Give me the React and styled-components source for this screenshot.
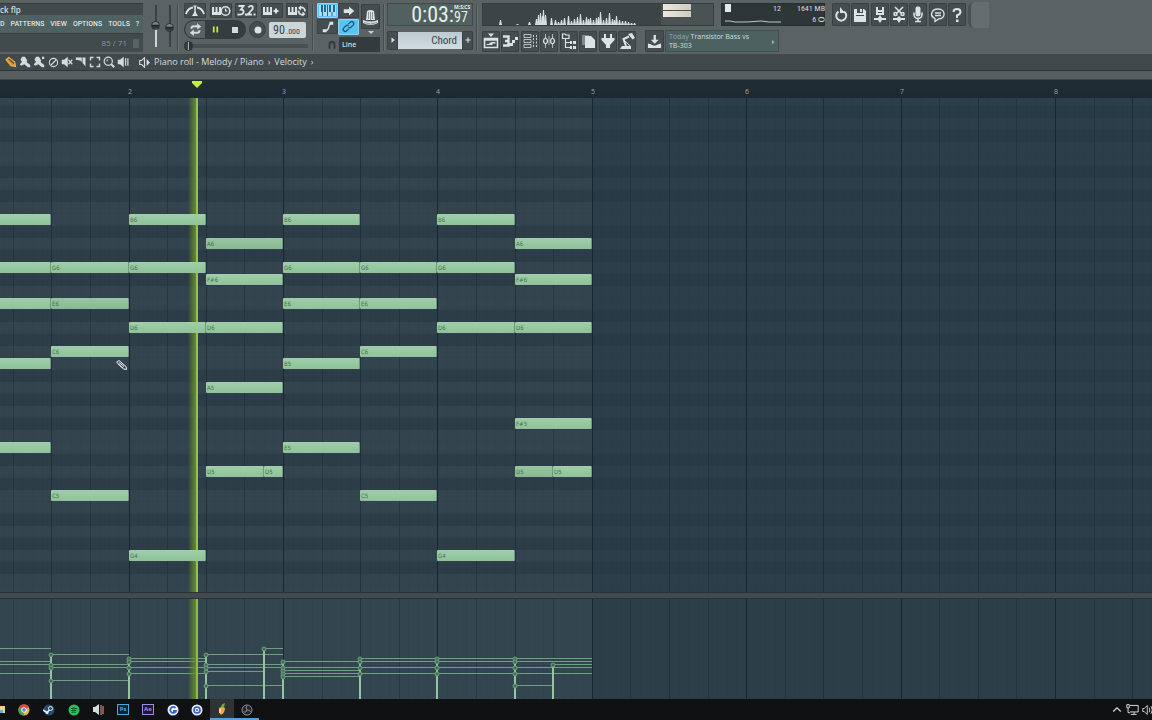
import React from 'react';
import styled, { createGlobalStyle, css } from 'styled-components';

const Global = createGlobalStyle`
  *, *::before, *::after { box-sizing: border-box; }
  body { margin: 0; background: #101112; overflow-x: hidden; }
  button, input, select { font: inherit; color: inherit; margin: 0; padding: 0; border: 0; background: none; outline: none; }
`;

const narrow = '"Liberation Sans Narrow", "Roboto Condensed", "Open Sans Condensed", "DejaVu Sans Condensed", sans-serif';
const sans = '"Open Sans", "Noto Sans", sans-serif';

/* ---------- frame ---------- */
const Page = styled.div`
  display: flex;
  flex-direction: column;
  min-height: 100vh;
  overflow: hidden;
  font-family: ${sans};
  color: #d3dcdd;
`;
const Header = styled.header`
  display: flex;
  height: 54px;
  background: #5a6264;
  overflow: hidden;
`;
const Col = styled.div`
  display: flex;
  flex-direction: column;
  flex: none;
  width: ${p => p.$w}px;
  margin-right: ${p => p.$mr || 0}px;
  padding-top: ${p => p.$flush ? 0 : 3}px;
  gap: ${p => p.$gap || 0}px;
`;
const Line = styled.div`
  display: flex;
  flex: none;
  align-items: center;
  justify-content: ${p => p.$justify || 'flex-start'};
  height: ${p => p.$h}px;
  gap: ${p => p.$gap || 0}px;
`;
const Divider = styled.div`
  flex: none;
  width: 2px;
  margin: 4px ${p => p.$mr || 0}px 3px 0;
  background: #454c4f;
  border-right: 1px solid #697173;
`;

/* ---------- title and menu ---------- */
const Title = styled.div`
  height: 12px;
  background: #424a4c;
  border-top: 1px solid #343b3e;
  font: 600 8px/11px ${sans};
`;
const Menu = styled.nav`
  display: flex;
  align-items: center;
  height: 18px;
  gap: 6px;
  background: #4f6261;
  font: 8px/18px ${narrow};
  color: #f2f7f6;
  button { white-space: nowrap; }
`;
const Hint = styled.div`
  display: flex;
  justify-content: flex-end;
  align-items: center;
  gap: 6px;
  height: 19px;
  padding-right: 4px;
  background: #424a4c;
  border-top: 1px solid #363e40;
  font: 8px/16px ${sans};
  color: #8e9798;
  i { width: 6px; height: 9px; background: #596163; }
`;

const VSlider = styled.input.attrs({ type: 'range' })`
  appearance: none;
  writing-mode: vertical-lr;
  direction: rtl;
  width: 9px;
  height: 42px;
  background: linear-gradient(#3b4244, #3b4244) center / 2px 100% no-repeat;
  ${p => p.$lit && css`background: linear-gradient(#3b4244 50%, #cdd5d6 50%) center / 2px 100% no-repeat;`}
  &::-webkit-slider-thumb {
    appearance: none;
    width: 9px;
    height: 9px;
    border-radius: 5px;
    background: linear-gradient(#7d8587 30%, #22282a 50%, #454c4f);
    border: 1px solid #2d3335;
  }
`;
const HSlider = styled.input.attrs({ type: 'range' })`
  appearance: none;
  width: 100%;
  height: 10px;
  background: linear-gradient(#495053, #495053) center / 100% 4px no-repeat;
  &::-webkit-slider-thumb {
    appearance: none;
    width: 9px;
    height: 10px;
    border-radius: 5px;
    background: linear-gradient(90deg, #3a4143 40%, #aab2b3 50%, #2d3436 60%);
    border: 1px solid #2b3234;
  }
`;

/* ---------- buttons ---------- */
const Tool = styled.button`
  display: flex;
  flex: none;
  align-items: center;
  justify-content: center;
  width: ${p => p.$w || 22}px;
  height: ${p => p.$h || 15}px;
  background: ${p => p.$on ? '#5cc3f2' : '#454d50'};
  border: 1px solid ${p => p.$on ? '#8ad8f8' : '#394144'};
  border-radius: ${p => p.$round ? 9 : 1}px;
  color: ${p => p.$on ? '#195a82' : '#dce3e4'};
`;
const HatCol = styled.div`
  display: flex;
  flex-direction: column;
  align-items: center;
  gap: 2px;
`;
const Pill = styled.div`
  display: flex;
  flex: none;
  height: 19px;
  width: 62px;
  border: 1px solid #333a3c;
  border-radius: 10px;
  overflow: hidden;
  background: #363d3f;
  button { display: flex; flex: 1; align-items: center; justify-content: center; }
  button:first-child { background: #596163; border-radius: 9px 0 0 9px; }
`;
const Tempo = styled.label`
  display: flex;
  align-items: baseline;
  justify-content: flex-end;
  flex: none;
  width: 37px;
  height: 16px;
  padding-right: 6px;
  border-radius: 2px;
  background: #ccd6d9;
  color: #38444a;
  font: 8px/16px ${narrow};
  input { width: 13px; height: 16px; font-size: 12px; }
`;
const Snap = styled.select`
  appearance: none;
  width: 41px;
  height: 15px;
  padding-left: 3px;
  background: #343b3e;
  font: 600 7px/15px ${sans};
`;
const Clock = styled.div`
  display: flex;
  justify-content: flex-end;
  height: 23px;
  background: #50615f;
  border: 1px solid #414b4c;
  color: #e6efed;
  font: 22px/21px ${narrow};
`;
const Cents = styled.span`
  display: flex;
  flex-direction: column;
  width: 18px;
  font: 14px/13px ${narrow};
  small { font: 700 5px/7px ${sans}; }
`;
const Pattern = styled.select`
  appearance: none;
  flex: 1;
  height: 17px;
  padding-right: 5px;
  background: linear-gradient(#bccad1, #d2dde0);
  color: #34434b;
  font: 11px/17px ${narrow};
  text-align-last: right;
`;
const Scope = styled.div`
  display: flex;
  flex: none;
  width: 232px;
  height: 23px;
  background: #3d4447;
  border: 1px solid #353c3f;
`;
const Meter = styled.div`
  width: 52px;
  padding: 0 2px;
  background: #4b5254;
  div { width: 28px; height: 6px; margin-bottom: 1px; background: linear-gradient(90deg, #ece9dc, #cfcdbf); }
`;
const Cpu = styled.div`
  display: grid;
  grid-template-columns: 10px 1fr 44px;
  flex: none;
  width: 104px;
  height: 23px;
  padding: 0 2px 0 3px;
  background: #2e3638;
  border: 1px solid #272e30;
  font: 8px/10px ${narrow};
  text-align: right;
  svg { grid-column: 1 / 3; }
  i { width: 6px; height: 8px; background: #e3e8e8; }
`;
const News = styled.button`
  display: flex;
  align-items: center;
  justify-content: space-between;
  width: 114px;
  height: 22px;
  padding: 0 4px 0 3px;
  background: #4d6160;
  border: 1px solid #41504f;
  font: 7px/9px ${sans};
  text-align: left;
  span span { color: #94a3a3; }
`;
const Patch = styled.div`
  width: 21px;
  height: 26px;
  background: #656d6e;
  border-left: 3px solid #4a5254;
  border-radius: 6px 0 0 6px;
`;

/* ---------- piano roll toolbar ---------- */
const RollBar = styled.div`
  display: flex;
  align-items: center;
  height: 17px;
  padding-left: 4px;
  background: #42494c;
  border-bottom: 1px solid #2f3537;
  button { display: flex; width: 14px; justify-content: center; }
`;
const Crumbs = styled.div`
  display: flex;
  gap: 4px;
  padding-left: 9px;
  align-items: center;
  font: 500 9px/16px ${sans};
  white-space: nowrap;
`;
const Strip = styled.div`
  height: 9px;
  background: #565e60;
  border-bottom: 1px solid #3a4346;
`;

/* ---------- editor ---------- */
const Ruler = styled.div`
  position: relative;
  height: 18px;
  background: linear-gradient(#202e36, #1c2930);
  overflow: hidden;
  svg { position: absolute; top: 1px; left: 191px; }
`;
const BarNumber = styled.span`
  position: absolute;
  bottom: 0;
  font: 7px/13px ${sans};
  color: #9aa6aa;
`;
const Grid = styled.main`
  position: relative;
  flex: 1 0 494px;
  overflow: hidden;
  background: #31434e;
`;
const Rows = styled.div`
  position: absolute;
  inset: 0;
`;
const KeyRow = styled.div`
  height: ${p => p.$h || 12}px;
  background: ${p => p.$black ? '#2d3d48' : '#33444f'};
  border-bottom: 1px solid ${p => p.$black ? '#2d3d48' : '#31424c'};
`;
const GridLine = styled.div`
  position: absolute;
  top: 0;
  bottom: 0;
  width: 1px;
  background: ${p => ({ bar: '#172731', half: 'rgba(20,34,43,.5)', beat: 'rgba(20,34,43,.32)', sub: 'rgba(20,34,43,.06)' })[p.$kind]};
`;
const Beyond = styled.div`
  position: absolute;
  top: 0;
  bottom: 0;
  right: 0;
  background: rgba(32, 54, 64, .36);
`;
const NoteBox = styled.div`
  position: absolute;
  height: 11px;
  padding-left: 1px;
  overflow: hidden;
  background: ${p => p.$dim ? 'linear-gradient(#96c7a0, #88b994)' : 'linear-gradient(#9fcfa8, #8fc29a)'};
  border-right: 1px solid #6d9a7c;
  border-radius: 1px;
  color: #44704f;
  font: 6px/12px "DejaVu Sans Condensed", "DejaVu Sans", sans-serif;
`;
const Playhead = styled.div`
  position: absolute;
  top: 0;
  bottom: 0;
  left: 188px;
  width: 10px;
  background: linear-gradient(90deg, rgba(100,140,30,0), rgba(104,146,36,.85) 7px, #5f8a2c 8px, #8fb848 8px, #8fb848);
`;
const Glow = styled.div`
  position: absolute;
  top: 0;
  bottom: 0;
  left: 196px;
  width: 2px;
  background: rgba(160, 205, 90, .4);
`;
const Cursor = styled.svg`
  position: absolute;
  left: 115px;
  top: 261px;
`;
const Splitter = styled.div`
  height: 7px;
  background: #43494c;
  border: solid #283238;
  border-width: 1px 0;
`;
const Velocity = styled.section`
  position: relative;
  height: 100px;
  overflow: hidden;
  background: #33454f;
  svg { position: absolute; inset: 0; width: 100%; height: 100%; }
`;

/* ---------- taskbar ---------- */
const Taskbar = styled.footer`
  display: flex;
  justify-content: space-between;
  height: 21px;
  background: #101112;
  overflow: hidden;
`;
const Apps = styled.div`
  display: grid;
  grid-template-columns: 12px repeat(10, 1fr);
  width: 259px;
`;
const AppButton = styled.button`
  display: flex;
  align-items: center;
  justify-content: center;
  min-width: 0;
  background: ${p => p.$active ? '#303336' : 'none'};
  ${p => p.$open && css`box-shadow: inset 0 -2px #5f9ed0;`}
`;
const Badge = styled.span`
  width: 12px;
  height: 11px;
  border: 1px solid ${p => p.$c};
  background: ${p => p.$bg};
  color: ${p => p.$c};
  font: 700 6px/9px ${sans};
  text-align: center;
`;
const Tray = styled.div`
  display: flex;
  align-items: center;
  gap: 3px;
  margin-right: -2px;
  button { display: flex; }
`;

/* ---------- icons ---------- */
const Svg = ({ s = 14, w = s, box = 16, children, fill }) => (
  <svg width={w} height={s} viewBox={`0 0 ${box * w / s} ${box}`} fill={fill ? 'currentColor' : 'none'} stroke={fill ? 'none' : 'currentColor'} strokeWidth="1.6" aria-hidden="true">{children}</svg>
);
const Keys = ({ children }) => (
  <svg width="20" height="12" viewBox="0 0 20 12" fill="none" stroke="currentColor" strokeWidth="1.5" aria-hidden="true">
    <path d="M1 2h2v5h1.500V2h2v5H8V2h2v8H1z" fill="currentColor" stroke="none" />
    {children}
  </svg>
);
const icons = {
  metronome: <svg width="20" height="13" viewBox="0 0 20 13" fill="none" stroke="currentColor" aria-hidden="true"><path d="M1 10Q3 4 8 3.500M19 10Q17 4 12 3.500" strokeWidth="1.800" /><path d="M10 3v7" strokeWidth="1.500" /><path d="M7 12l3-5 3 5zM8 1.500h4L10 4z" fill="currentColor" stroke="none" /></svg>,
  wait: <Keys><circle cx="14.500" cy="6" r="4.300" /><path d="M14.500 3.500V6h2" strokeWidth="1.200" /></Keys>,
  overdub: <Keys><path d="M11.500 6h5M14 3.500v5" strokeWidth="2" /></Keys>,
  loopRec: <Keys><path d="M18 6.500A3.600 3.600 0 0 0 13 2.700M11.500 5.500A3.600 3.600 0 0 0 16.500 9.300" strokeWidth="1.700" /><path d="M14 .5v5L11 3zM15.500 6.500v5L18.500 9z" fill="currentColor" stroke="none" /></Keys>,
  count: <svg width="20" height="13" viewBox="0 0 20 13" fill="none" stroke="currentColor" strokeWidth="1.800" aria-hidden="true"><path d="M2.500 2h5L5 5.500q3 0 2.500 2.800T1.500 10.500M12.500 3.500q1-1.800 3-1.500t1 3.300L11.500 10.500h4.500" /><path d="M9 9.500h2v2H9zM17.500 9.500h2v2h-2z" fill="currentColor" stroke="none" /></svg>,
  swap: <Svg s={13}><path d="M3 7q0-3 3-3h5M13 9q0 3-3 3H4" strokeWidth="2.300" /><path d="M10 0l5 4.500L10 8zM6 8l-5 4 5 4z" fill="currentColor" stroke="none" /></Svg>,
  piano: <svg width="19" height="13" viewBox="0 0 19 13" aria-hidden="true"><path fill="#a9dcf5" d="M1 1h17v11H1z" /><path fill="#1c6a98" d="M3 1h2v7H3zM6 1h2v7H6zM11 1h2v7h-2zM15 1h2v7h-2zM5 8v4H4V8zM9 1h1v11H9zM13.500 8v4h1V8z" /></svg>,
  arrow: <Svg s={12} fill><path d="M1 5.500h7V2l7 6-7 6v-3.500H1z" /></Svg>,
  slide: <Svg s={12}><path d="M4 13q4 0 5-5t4-5" strokeWidth="1.800" /><path d="M1 11h5v4H1zM10 1h5v4h-5z" fill="currentColor" stroke="none" /></Svg>,
  link: <Svg s={13}><path d="M8 5l2.500-2.500a2.500 2.500 0 0 1 3.500 3.500l-3 3q-1.500 1.200-3.300 0M8 11l-2.500 2.500a2.500 2.500 0 0 1-3.500-3.500l3-3q1.500-1.200 3.300 0" strokeWidth="1.700" /></Svg>,
  hat: <svg width="17" height="20" viewBox="0 0 17 20" fill="currentColor" aria-hidden="true"><path d="M5 4q3.500-2 7 0l1 9H4z" /><path d="M1 13q7.500 3 15 0v3q-7.500 4-15 0z" /><path d="M6.500 5v7M8.500 5v8M10.500 5v7M2 15.500q6.500 3 13 0" fill="none" stroke="#8b9496" /></svg>,
  magnet: <Svg s={10}><path d="M4 14V7a4 4 0 0 1 8 0v7" stroke="#323a3c" strokeWidth="3" /></Svg>,
  playlist: <Svg s={16}><path d="M1.500 5.500h13v9h-13zM2 7h12" /><path d="M5 .5h6L8 4zM3.500 11h3V9.500h2V9h4v1.500h-3V12h-6z" fill="currentColor" stroke="none" /></Svg>,
  roll: <Svg s={16}><path d="M1 3.500h5.500v9H1M3 8h4" strokeWidth="2.400" /><path d="M7 10h4v3H7zM10 7h3v3h-3zM13 4h3v3h-3z" fill="currentColor" stroke="none" /></Svg>,
  rack: <Svg s={16}><path d="M2 1.500h7v3H2zM2 6.500h7v3H2zM2 11.500h7v3H2z" strokeWidth="1" opacity=".75" /><path d="M11 3h1M14 3h1M11 6h1M14 6h1M11 9.500h1M14 9.500h1M11 13h1M14 13h1" strokeWidth="2" opacity=".85" /></Svg>,
  mixer: <Svg s={16}><path d="M4.500 1v4M4.500 11v4M11.500 1v4M11.500 11v4M8 3v9" strokeWidth="1" opacity=".7" /><path d="M4.500 5q2 1 2 3t-2 3q-2-1-2-3t2-3zM11.500 5q2 1 2 3t-2 3q-2-1-2-3t2-3z" strokeWidth="1.300" /></Svg>,
  tree: <Svg s={16}><path d="M1.500 1h2.500l1 1h3v3.500H1.500zM4.500 6v8.500h5M4.500 9.500h5" strokeWidth="1.200" /><path d="M9 8h2v3H9zM12 8h3v3h-3zM9 13h2v3H9zM12 13h3v3h-3z" fill="currentColor" stroke="none" /></Svg>,
  pages: <Svg s={16} fill><path d="M2 2h7v2H5v8H2z" opacity=".4" /><path d="M5 3h6l4 4v8H5z" /></Svg>,
  plug: <Svg s={16} fill><path d="M4 1h2v4h4V1h2v4h2.500v2l-4.500 5v3H6v-3L1.500 7V5H4z" /></Svg>,
  robot: <Svg s={16}><path d="M10 3.500L4.500 6 7 13" strokeWidth="2" /><path d="M9 1l4-1 3 5-2.500 1.500zM3 13h9v3H1z" fill="currentColor" stroke="none" /><path d="M5 7l6 6" strokeWidth="1" /></Svg>,
  download: <Svg s={15} fill><path d="M7 1h2.500v5h3l-4.300 4.500L4 6h3zM1 10l3 1q4 3 8 0l3-1v5H1z" /></Svg>,
  undo: <Svg s={16}><path d="M5.500 4.500A5 5 0 1 0 11 4.500" strokeWidth="2" /><path d="M5 0h2v6h5l-5-6z" fill="currentColor" stroke="none" /></Svg>,
  save: <Svg s={16} fill><path fillRule="evenodd" d="M2 2h10l2 2v11H2zM5 2v4h6V2zM4 8v1h8V8z" /><path d="M8 2h2v3H8z" /></Svg>,
  saveNew: <Svg s={18} fill><path fillRule="evenodd" d="M4 0h8v8H4zM6 0v3h4V0zM6 5v1h4V5z" /><path d="M2 11h4l2-3 2 3h4v2h-4l-2 3-2-3H2z" /></Svg>,
  cut: <Svg s={18}><path d="M4 0l6 6M12 0L6 6" /><circle cx="4.500" cy="7" r="1.500" /><circle cx="11.500" cy="7" r="1.500" /><path d="M2 11h4l2-2 2 2h4v2h-4l-2 3-2-3H2z" fill="currentColor" stroke="none" /></Svg>,
  mic: <Svg s={17}><path d="M4 6v2a4 4 0 0 0 8 0V6M8 12v3M5 15h6" /><rect x="5.500" y="0" width="5" height="10" rx="2" fill="currentColor" stroke="none" /></Svg>,
  chat: <Svg s={16}><path d="M8 2C16 2 16 12 8.500 12L5 14.500V11.500C-1 9 1.500 2 8 2zM5 6h6M5 8.500h6" strokeWidth="1.300" /></Svg>,
  help: <Svg s={16}><path d="M4.500 5q0-3 3.500-3t3.500 3q0 2-3.500 3.500V11" strokeWidth="2" /><path d="M7 12.500h2.500V15H7z" fill="currentColor" stroke="none" /></Svg>,
  pencil: <Svg s={12}><path d="M1.500 5l3.500-3 8 6 1 6-6-1z" fill="#d79a3c" stroke="#e8ad46" /><path d="M5 4l7 6" stroke="#5b4a2c" /></Svg>,
  brush: <Svg s={12} fill><path d="M4 1h4l3 5-1 2 5 4v3h-3l-5-4-4 2-2-2 3-3-2-3z" /></Svg>,
  brush2: <Svg s={12} fill><path d="M4 1h4l3 5-1 2 5 4v3h-3l-5-4-4 2-2-2 3-3-2-3zM12 1h3v3h-3z" /></Svg>,
  no: <Svg s={11}><circle cx="8" cy="8" r="6" /><path d="M4 12l8-8" /></Svg>,
  mute: <Svg s={12}><path d="M1 5h3l5-4v14l-5-4H1z" fill="currentColor" stroke="none" /><path d="M10 5l5 6M15 5l-5 6" /></Svg>,
  slice: <Svg s={12} fill><path d="M1 2h8v6L7 6 1 5zM10 2h4v12l-4-5z" /></Svg>,
  select: <Svg s={12}><path d="M2 6V2h4M10 2h4v4M14 10v4h-4M6 14H2v-4" strokeWidth="1.800" /></Svg>,
  zoom: <Svg s={12}><circle cx="7" cy="7" r="5.500" /><path d="M11 11l4 4" strokeWidth="2.500" /><path d="M5 7a2 2 0 0 1 2-2" /></Svg>,
  play: <Svg s={12}><path d="M1 5h3l5-4v14l-5-4H1z" fill="currentColor" stroke="none" /><path d="M11.500 3v10M14.500 3v10" /></Svg>,
  speaker: <Svg s={11}><path d="M1 5h3l4-4v14l-4-4H1z" /><path d="M11 3l5 5-5 5z" fill="currentColor" stroke="none" /></Svg>,
};

/* ---------- song data ---------- */
const ORIGIN = 129;
const BEAT = 38.6;
const ROW = 12;
const B6_TOP = 116;
const beatX = b => Math.floor(ORIGIN + b * BEAT);
const names = ['B', 'A#', 'A', 'G#', 'G', 'F#', 'F', 'E', 'D#', 'D', 'C#', 'C'];
const rowOf = note => names.indexOf(note.slice(0, -1)) + (6 - Number(note.slice(-1))) * 12;

const notes = [
  ['B6', -4, -2], ['G6', -4, -2], ['E6', -4, -2], ['B5', -4, -2], ['E5', -4, -2],
  ['G6', -2, 0], ['E6', -2, 0, true], ['C6', -2, 0], ['C5', -2, 0],
  ['B6', 0, 2], ['G6', 0, 2], ['D6', 0, 2], ['G4', 0, 2],
  ['A6', 2, 4, true], ['F#6', 2, 4], ['D6', 2, 4], ['A5', 2, 4], ['D5', 2, 3.5], ['D5', 3.5, 4],
  ['B6', 4, 6], ['G6', 4, 6], ['E6', 4, 6], ['B5', 4, 6], ['E5', 4, 6],
  ['G6', 6, 8], ['E6', 6, 8], ['C6', 6, 8], ['C5', 6, 8],
  ['B6', 8, 10], ['G6', 8, 10], ['D6', 8, 10], ['G4', 8, 10],
  ['A6', 10, 12], ['F#6', 10, 12], ['D6', 10, 12], ['F#5', 10, 12], ['D5', 10, 11, true], ['D5', 11, 12],
];

const velocities = [
  [-4, -2, [50, 63, 66, 75]],
  [-2, 0, [56, 66, 69, 82]],
  [0, 2, [60, 63, 69, 75]],
  [2, 4, [56, 66, 69, 87]],
  [2, 3.5, [73]],
  [3.5, 4, [50]],
  [4, 6, [63, 69, 72, 75, 78]],
  [6, 8, [60, 63, 69, 75]],
  [8, 10, [60, 63, 69, 75]],
  [10, 12, [60, 63, 69, 75]],
  [10, 11, [87]],
  [11, 12, [66]],
];

// Spectrum peaks as [x, height] pairs.
const peaks = [[17, 5], [34, 1], [46, 3], [53, 6], [55, 10], [57, 12], [59, 9], [60, 15], [62, 10], [68, 7], [72, 5], [75, 3], [78, 5], [81, 7], [85, 9], [88, 4], [91, 6], [94, 8], [97, 11], [100, 5], [103, 8], [105, 6], [107, 7], [110, 5], [113, 7], [115, 8], [117, 13], [120, 5], [123, 7], [126, 12], [129, 6], [131, 5], [133, 9], [136, 5], [139, 4], [142, 4], [145, 3], [148, 2], [151, 2]];

const gridLines = [];
for (let q = -13; q <= 160; q++) {
  const b = q / 4;
  const kind = b % 4 === 0 ? 'bar' : b % 2 === 0 ? 'half' : b % 1 === 0 ? 'beat' : 'sub';
  gridLines.push({ x: beatX(b), kind });
}
const Lines = () => gridLines.map(l => <GridLine key={l.x} $kind={l.kind} style={{ left: l.x }} />);

const rollTools = ['pencil', 'brush', 'brush2', 'no', 'mute', 'slice', 'select', 'zoom', 'play'];
const windows = ['playlist', 'roll', 'rack', 'mixer', 'tree', 'pages', 'plug', 'robot'];
const fileTools = ['undo', 'save', 'saveNew', 'cut', 'mic', 'chat', 'help'];
const Act = ({ name, ...p }) => <Tool aria-label={name} {...p}>{icons[name]}</Tool>;

const ToolSet = styled.div`
  display: flex;
  justify-content: space-between;
  flex: none;
  width: ${p => p.$w}px;
`;

function TopBar() {
  return (
    <Header>
      <Col $w={143} $mr={8}>
        <Title>ck flp</Title>
        <Menu>
          <button>D</button>
          {['PATTERNS', 'VIEW', 'OPTIONS', 'TOOLS', '?'].map(m => <button key={m}>{m}</button>)}
        </Menu>
        <Hint>85 / 71<i /></Hint>
      </Col>
      <Col $w={26}>
        <Line $h={46} $gap={5}>
          <VSlider $lit aria-label="Main volume" defaultValue="52" />
          <VSlider aria-label="Main pitch" defaultValue="46" />
        </Line>
      </Col>
      <Divider $mr={5} />
      <Col $w={124} $mr={4} $gap={2}>
        <Line $h={15} $justify="space-between">
          {['metronome', 'wait', 'count', 'overdub', 'loopRec'].map(n => <Act key={n} name={n} />)}
        </Line>
        <Line $h={19} $gap={3}>
          <Pill>
            <button aria-label="Song mode">{icons.swap}</button>
            <button aria-label="Pause"><Svg s={7} fill><path fill="#c8ea3c" d="M2 1h4v14H2zM10 1h4v14h-4z" /></Svg></button>
            <button aria-label="Stop"><Svg s={6} fill><path d="M0 0h16v16H0z" /></Svg></button>
          </Pill>
          <Tool $w={17} $h={17} $round aria-label="Record"><Svg s={8} fill><circle cx="8" cy="8" r="7" /></Svg></Tool>
          <Tempo><input aria-label="Tempo" defaultValue="90" />.000</Tempo>
        </Line>
        <HSlider aria-label="Song position" defaultValue="0" />
      </Col>
      <Divider $mr={3} />
      <Col $w={63} $mr={3} $gap={2}>
        <Line $h={32} $gap={2}>
          <Col $w={42} $flush>
            <Line $h={15}><Act name="piano" $on $w={21} /><Act name="arrow" $w={21} /></Line>
            <Line $h={17}><Act name="slide" $w={21} /><Act name="link" $on $w={21} $h={16} /></Line>
          </Col>
          <HatCol>
            <Act name="hat" $w={19} $h={25} />
            <svg width="6" height="3" aria-hidden="true"><path fill="#c9d1d2" d="M0 0h6L3 3z" /></svg>
          </HatCol>
        </Line>
        <Line $h={15} $gap={2} $justify="flex-end">{icons.magnet}<Snap aria-label="Snap"><option>Line</option></Snap></Line>
      </Col>
      <Divider $mr={2} />
      <Col $w={86} $mr={3} $gap={4}>
        <Clock>0:03:<Cents><small>M:S:CS</small>97</Cents></Clock>
        <Line $h={20}>
          <Tool $w={11} $h={19} aria-label="Previous pattern"><Svg s={6} fill><path d="M4 1l9 7-9 7z" /></Svg></Tool>
          <Pattern aria-label="Pattern"><option>Chord</option></Pattern>
          <Tool $w={11} $h={19} aria-label="Add pattern"><Svg s={6}><path d="M8 1v14M1 8h14" strokeWidth="3" /></Svg></Tool>
        </Line>
      </Col>
      <Divider $mr={4} />
      <Col $w={510} $gap={4}>
        <Line $h={23} $gap={7}>
          <Scope>
            <svg width="178" height="21" viewBox="0 0 178 21" fill="#d8dedf" aria-label="Spectrum">
              {peaks.map(([x, h]) => <path key={x} d={`M${x - 1} 21l1 ${-h}h1l1 ${h}z`} />)}
            </svg>
            <Meter><div /><div /></Meter>
          </Scope>
          <Cpu>
            <i /><span>12</span><span>1641 MB</span>
            <svg width="56" height="8" fill="none" stroke="#bfc7c8" aria-hidden="true"><path d="M0 6h5l5 1h12l14-1 8 1h12" /></svg>
            <span>6 ⬭</span>
          </Cpu>
          <Line $h={23} $gap={2}>
            <ToolSet $w={134}>{fileTools.map(n => <Act key={n} name={n} $w={18} $h={23} />)}</ToolSet>
            <Patch />
          </Line>
        </Line>
        <Line $h={22}>
          <ToolSet $w={154}>{windows.map(n => <Act key={n} name={n} $w={18} $h={21} />)}</ToolSet>
          <Divider $mr={7} />
          <Line $h={22} $gap={1}>
            <Act name="download" $w={19} $h={22} />
            <News><span><span>Today</span> Transistor Bass vs<br />TB-303</span><b>›</b></News>
          </Line>
        </Line>
      </Col>
    </Header>
  );
}

function Editor() {
  return (
    <>
      <Ruler>
        {[2, 3, 4, 5, 6, 7, 8].map(n => (
          <BarNumber key={n} style={{ left: beatX((n - 2) * 4) - 1 }}>{n}</BarNumber>
        ))}
        <svg width="12" height="8" aria-hidden="true"><path fill="#c6ee3d" d="M1 0h10v2L6 7 1 2z" /></svg>
      </Ruler>
      <Grid>
        <Rows>
          <KeyRow $h={8} />
          {Array.from({ length: 90 }, (_, i) => (
            <KeyRow key={i} $black={names[(i + 3) % 12].includes('#')} />
          ))}
        </Rows>
        <Beyond style={{ left: beatX(12) }} />
        <Lines />
        <Playhead />
        {notes.map(([n, from, to, dim]) => (
          <NoteBox key={n + from} $dim={dim} style={{ left: beatX(from), width: beatX(to) - beatX(from), top: B6_TOP + rowOf(n) * ROW }}>{from < -2 ? '' : n}</NoteBox>
        ))}
        <Glow />
        <Cursor width="13" height="12" viewBox="0 0 13 12" fill="none" stroke="#e8eeee" aria-hidden="true">
          <path d="M1.500 3L4 1.500l7 6 .5 3-3-.5z" fill="#3d4b52" /><path d="M4 3.500l5 4M3 5l5 4" />
        </Cursor>
      </Grid>
      <Splitter />
      <Velocity aria-label="Note velocity">
        <Beyond style={{ left: beatX(12) }} />
        <Lines />
        <svg fill="none">
          {velocities.map(([from, to, ys]) => {
            const x = beatX(from);
            return (
              <g key={`${from}-${to}`}>
                {ys.map(y => <path key={y} d={`M${x} ${y - 0.5}H${beatX(to)}`} stroke="#729d85" strokeWidth="1" />)}
                {ys[0] !== 73 && <path d={`M${x} ${ys[0]}V100`} stroke="#93c5a0" strokeWidth="2" />}
                {ys.map(y => <circle key={y} cx={x} cy={y} r="2" fill="#3f6a55" stroke="#6fa57e" />)}
              </g>
            );
          })}
        </svg>
        <Playhead />
      </Velocity>
    </>
  );
}

const Disc = ({ bg, children }) => (
  <svg width="12" height="12" viewBox="0 0 12 12" fill="none" aria-hidden="true"><circle cx="6" cy="6" r="5.500" fill={bg} />{children}</svg>
);

function Dock() {
  return (
    <Taskbar>
      <Apps>
        <AppButton aria-label="File Explorer"><svg width="12" height="9" aria-hidden="true"><path fill="#ecd488" d="M0 1h5v7H0z" /><path fill="#65b3dc" d="M0 5h3v3H0z" /></svg></AppButton>
        <AppButton aria-label="Chrome"><Disc bg="#e0b93b"><path fill="#d94b3b" d="M6 6L1 3.500a5.500 5.500 0 0 1 10 0z" /><path fill="#4aa35c" d="M6 6v5.500A5.500 5.500 0 0 1 1 3.500z" /><circle cx="6" cy="6" r="2.300" fill="#4d86e0" stroke="#fff" /></Disc></AppButton>
        <AppButton aria-label="Steam"><Disc bg="#244c74"><circle cx="7.500" cy="4.500" r="2" stroke="#e3ebf0" /><path d="M0 6l4 2.500L6.500 6" stroke="#e3ebf0" strokeWidth="1.600" /><circle cx="4" cy="8.500" r="1.500" fill="#e3ebf0" /></Disc></AppButton>
        <AppButton aria-label="Spotify"><Disc bg="#24c15c"><path d="M3 4.500q3-1.200 6.200.5M3.300 6.500q2.700-1 5 .3M3.600 8.300q2-.7 4 .3" stroke="#0e3a1e" /></Disc></AppButton>
        <AppButton aria-label="Audio"><svg width="13" height="12" aria-hidden="true"><path fill="#d9d9d9" d="M1 3h2l4-3v11L3 8H1z" /><path d="M9 1v10" stroke="#b0b0b0" /><path d="M11 2v8" stroke="#c9673a" strokeWidth="1.500" /></svg></AppButton>
        <AppButton aria-label="Photoshop"><Badge $c="#46a9de" $bg="#0a2535">Ps</Badge></AppButton>
        <AppButton aria-label="After Effects"><Badge $c="#a48add" $bg="#231536">Ae</Badge></AppButton>
        <AppButton aria-label="Groove"><Disc bg="#eef3fc"><path d="M8.500 4A3 3 0 1 0 9 7H6" stroke="#3863c8" strokeWidth="1.800" /></Disc></AppButton>
        <AppButton aria-label="Uplay"><Disc bg="#e4ebfb"><circle cx="6" cy="6" r="3" stroke="#3157cd" strokeWidth="1.600" /><circle cx="6" cy="6" r="1" fill="#3157cd" /></Disc></AppButton>
        <AppButton aria-label="FL Studio" $active $open><svg width="12" height="13" aria-hidden="true"><path fill="#f0a93a" d="M3 5q3-2 6 0 0 5-4 7-2-2-2-7z" /><path fill="#f8dc7a" d="M3 6h2v4H3z" /><path fill="#6ca545" d="M5 4q0-3 4-4l-1 4z" /></svg></AppButton>
        <AppButton aria-label="OBS" $open><Disc bg="#202224"><circle cx="6" cy="6" r="5" stroke="#8c9092" /><path d="M6 6q-2-2 0-4M6 6q3-.5 3.500 2M6 6q-.5 3-3.500 2" stroke="#8c9092" /></Disc></AppButton>
      </Apps>
      <Tray>
        <button aria-label="Hidden icons"><Svg s={12}><path d="M3 10l5-5 5 5" /></Svg></button>
        <button aria-label="Network"><Svg s={13}><path d="M5 3h10v8H5M10 11v3M6 14h7M1 2h3v4H1zM2.500 6v6H5" strokeWidth="1.200" /></Svg></button>
        <button aria-label="Volume"><Svg s={12}><path d="M1 6h2l4-4v12l-4-4H1zM9.500 5q2 3 0 6M12 3q3.500 5 0 10" strokeWidth="1.200" /></Svg></button>
      </Tray>
    </Taskbar>
  );
}

export default function App() {
  return (
    <Page>
      <Global />
      <TopBar />
      <RollBar>
        {rollTools.map(n => <button key={n} aria-label={n}>{icons[n]}</button>)}
        <Crumbs>{icons.speaker}<span>Piano roll - Melody / Piano</span><span>›</span><span>Velocity</span><span>›</span></Crumbs>
      </RollBar>
      <Strip />
      <Editor />
      <Dock />
    </Page>
  );
}
